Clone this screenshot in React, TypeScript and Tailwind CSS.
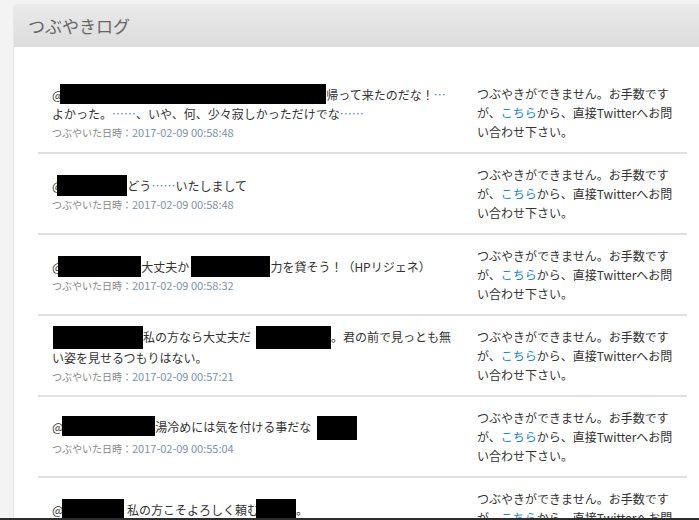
import React from 'react';

// redaction box drawn over a user name
function Bar({ w, h = 20, ml = 0 }: { w: number; h?: number; ml?: number }) {
  return (
    <span
      className="inline-block bg-black align-top -my-[1px]"
      style={{ width: w, height: h, marginLeft: ml }}
    />
  );
}

function Dots({ children }: { children: React.ReactNode }) {
  return <span className="text-[#4d86c9]">{children}</span>;
}

interface Tweet {
  id: number;
  body: React.ReactNode;
  date: string;
}

const tweets: Tweet[] = [
  {
    id: 1,
    body: (
      <>
        @<Bar w={266} ml={-3} />帰って来たのだな！<Dots>…</Dots>
        <br />
        よかった。<Dots>……</Dots>、いや、何、少々寂しかっただけでな<Dots>……</Dots>
      </>
    ),
    date: '2017-02-09 00:58:48',
  },
  {
    id: 2,
    body: (
      <>
        @<Bar w={70} h={21} ml={-6} />どう<Dots>……</Dots>いたしまして
      </>
    ),
    date: '2017-02-09 00:58:48',
  },
  {
    id: 3,
    body: (
      <>
        @<Bar w={83} h={21} ml={-5} />大丈夫か<Bar w={79} h={21} ml={2} />力を貸そう！（HPリジェネ）
      </>
    ),
    date: '2017-02-09 00:58:32',
  },
  {
    id: 4,
    body: (
      <>
        <Bar w={90} h={23} ml={1} />私の方なら大丈夫だ<Bar w={75} h={23} ml={5} />。君の前で見っとも無
        <br />
        い姿を見せるつもりはない。
      </>
    ),
    date: '2017-02-09 00:57:21',
  },
  {
    id: 5,
    body: (
      <>
        @<Bar w={93} ml={-1} />湯冷めには気を付ける事だな<Bar w={40} h={24} ml={6} />
      </>
    ),
    date: '2017-02-09 00:55:04',
  },
  {
    id: 6,
    body: (
      <>
        @<Bar w={62} ml={-1} /> 私の方こそよろしく頼む<Bar w={40} ml={-3} />。
      </>
    ),
    date: '2017-02-09 00:54:40',
  },
];

function TweetRow({ tweet }: { tweet: Tweet }) {
  return (
    <div className="flex items-center border-b-2 border-[#e0e0e0] py-[11px]">
      <div className="flex-1 pl-[14px] pr-[8px]">
        <p className="text-[12px] leading-[19px] text-[#333] whitespace-nowrap">{tweet.body}</p>
        <p className="mt-[2px] text-[10px] leading-[15px] whitespace-nowrap">
          <span className="text-[#888]">つぶやいた日時：</span>
          <span className="text-[11px] text-[#7d91ab]">{tweet.date}</span>
        </p>
      </div>
      <div className="w-[196px] mr-[14px] text-[12px] leading-[19px] text-[#333]">
        つぶやきができません。お手数ですが、<span className="text-[#1a86d0]">こちら</span>から、直接Twitterへお問い合わせ下さい。
      </div>
    </div>
  );
}

export default function App() {
  return (
    <div className="h-[520px] flex flex-col overflow-hidden bg-[#f3f3f3] font-['Noto_Sans_CJK_JP',sans-serif]">
      <div className="flex-1 overflow-hidden pt-[4px] pl-[13px]">
        <div className="bg-white rounded-tl-[3px] border-l border-[#e6e6e6]">
          <div className="h-[43px] flex items-center px-[14px] bg-gradient-to-b from-[#eaeaea] to-[#dcdcdc] rounded-tl-[3px]">
            <h2 className="text-[17px] text-[#666]">つぶやきログ</h2>
          </div>
          <div className="pl-[24px] pr-[12px] pt-[26px]">
            {tweets.map((t) => (
              <TweetRow key={t.id} tweet={t} />
            ))}
          </div>
        </div>
      </div>
      <div className="h-[2px] bg-[#2d2d2d]" />
    </div>
  );
}
